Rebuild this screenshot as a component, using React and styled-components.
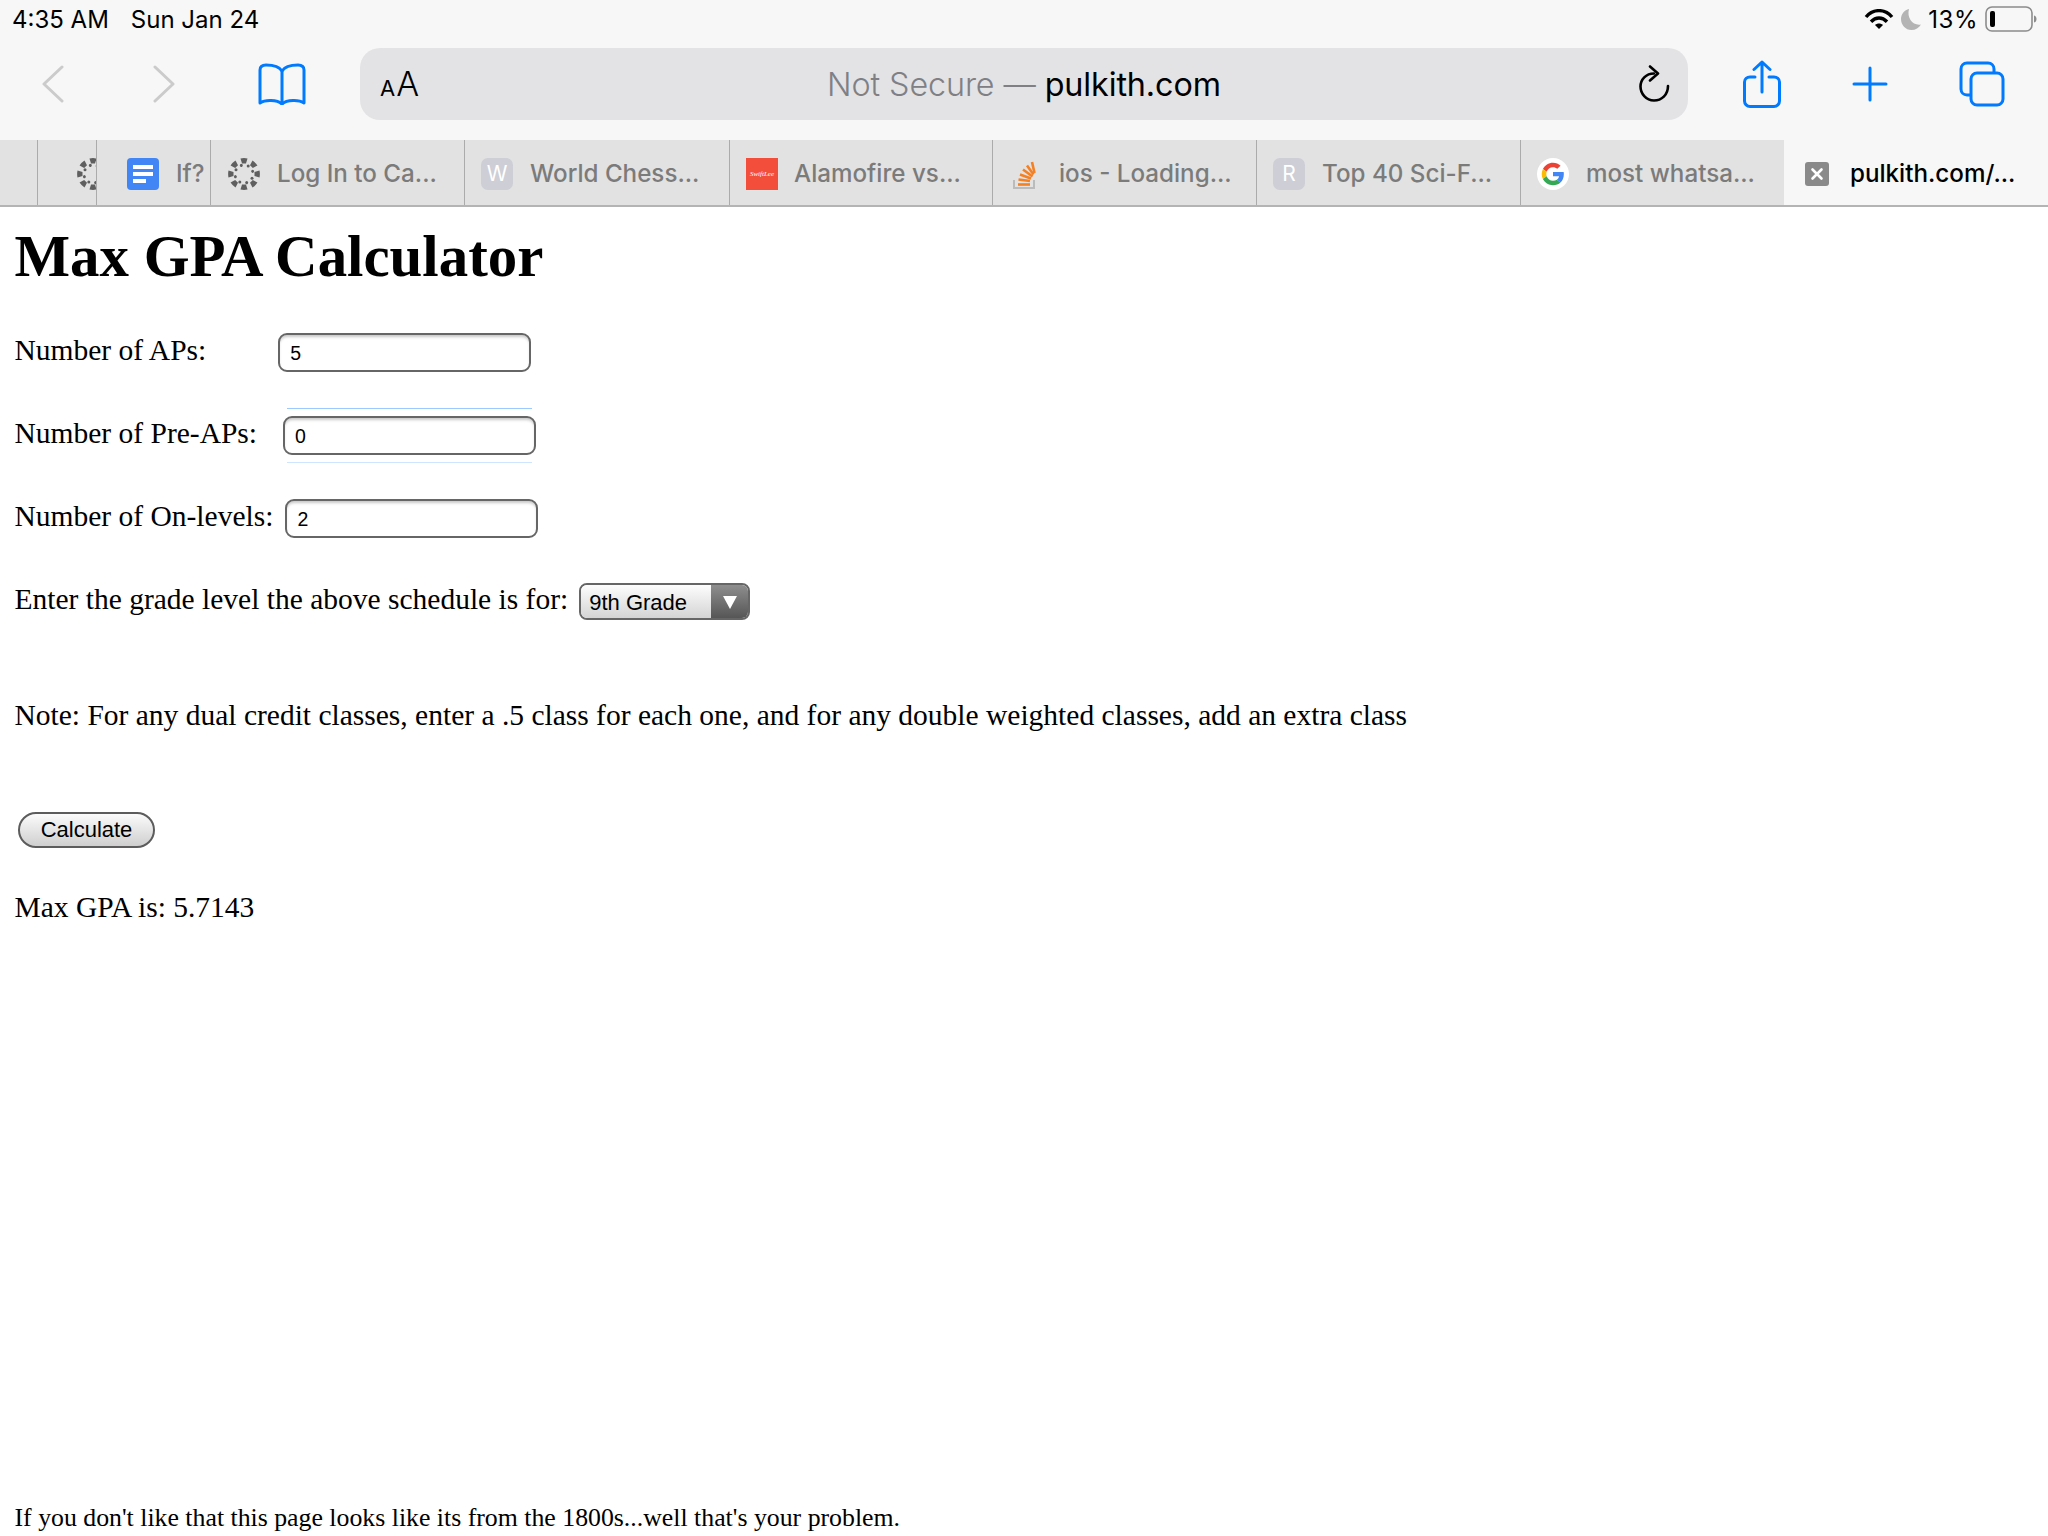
import React from 'react';
import styled, { createGlobalStyle } from 'styled-components';

const GlobalStyle = createGlobalStyle`
  html, body { margin: 0; padding: 0; background: #fff; }
  * { box-sizing: border-box; }
`;

const Screen = styled.div`
  width: 2048px;
  height: 1536px;
  display: flex;
  flex-direction: column;
  overflow: hidden;
  font-family: "Liberation Serif", serif;
  color: #000;
`;

const Chrome = styled.header`
  background: #f7f7f7;
  font-family: Inter, "Liberation Sans", sans-serif;
`;

const StatusBar = styled.div`
  height: 48px;
  padding: 0 11px 10px 12px;
  display: flex;
  align-items: center;
  justify-content: space-between;
  font-size: 24px;
`;

const StatusLeft = styled.div`
  display: flex;
  gap: 22px;
`;

const StatusRight = styled.div`
  display: flex;
  align-items: center;
  gap: 7px;
`;

const Battery = styled.span`
  letter-spacing: 0.5px;
`;

const Toolbar = styled.div`
  height: 92px;
  padding: 0 44px 20px 42px;
  display: flex;
  align-items: center;
`;

const NavButton = styled.div`
  display: flex;
  width: ${p => p.$w}px;
  flex: none;
`;

const AddressBar = styled.div`
  width: 1328px;
  height: 72px;
  flex: none;
  margin-right: 55px;
  padding: 0 18px 0 20px;
  background: #e3e3e6;
  border-radius: 20px;
  display: flex;
  align-items: center;
  justify-content: space-between;
`;

const ReaderA = styled.div`
  display: flex;
  align-items: baseline;
  gap: 1px;
  width: 60px;
  line-height: 1;
`;

const SmallA = styled.span`font-size: 22px;`;
const BigA = styled.span`font-size: 34px; font-weight: 300;`;

const Url = styled.div`
  margin-right: 30px;
  font-size: 32.3px;
  font-weight: 300;
  color: #808084;
  white-space: nowrap;
  letter-spacing: -0.1px;
`;

const Host = styled.span`
  color: #000;
  font-weight: 400;
`;

const Actions = styled.div`
  display: flex;
  align-items: center;
  gap: 71px;
`;

const TabBar = styled.div`
  display: flex;
  height: 67px;
  border-bottom: 2px solid #b4b4b4;
  background: #e2e2e2;
`;

const Tab = styled.div`
  width: ${p => p.$w}px;
  flex: none;
  height: 65px;
  padding: 2px 0 0 ${p => p.$pl ?? 16}px;
  display: flex;
  align-items: center;
  gap: ${p => p.$gap ?? 17}px;
  overflow: hidden;
  border-right: ${p => (p.$active || p.$last ? 'none' : '1px solid #ababab')};
  background: ${p => (p.$active ? '#f7f7f7' : '#e2e2e2')};
  color: ${p => (p.$active ? '#000' : '#7b7b7b')};
  font-size: 24.2px;
  font-weight: 500;
  white-space: nowrap;
`;

const LetterIcon = styled.div`
  width: 32px;
  height: 32px;
  flex: none;
  border-radius: 7px;
  background: #cdced6;
  color: #fff;
  font-size: 21px;
  font-weight: 400;
  display: flex;
  align-items: center;
  justify-content: center;
`;

const RedIcon = styled.div`
  width: 32px;
  height: 32px;
  flex: none;
  background: #f24e3b;
  color: #fff;
  font-family: "Liberation Serif", serif;
  font-style: italic;
  font-size: 7px;
  display: flex;
  align-items: center;
  justify-content: center;
`;

const Favicon = styled.svg`
  flex: none;
  display: block;
`;

const Page = styled.main`
  flex: 1;
  padding: 0 14.5px;
  display: flex;
  flex-direction: column;
  font-size: 29.5px;
`;

const Title = styled.h1`
  margin: 16px 0 20px;
  font-size: 58.9px;
  line-height: 68px;
  font-weight: bold;
`;

const Row = styled.div`
  height: 83px;
  display: flex;
  align-items: center;
  white-space: nowrap;
`;

const Label = styled.label`
  position: relative;
  top: -2px;
`;

const InputWrap = styled.div`
  position: relative;
  margin-left: ${p => p.$ml}px;
  ${p => p.$focusLines && `
    &::before, &::after {
      content: '';
      position: absolute;
      left: 4px;
      width: 245px;
      height: 1px;
      background: #9ccaff;
    }
    &::before { top: -8px; }
    &::after { bottom: -8px; background: #cfe4ff; }
  `}
`;

const NumberInput = styled.input`
  display: block;
  width: 253px;
  height: 39px;
  padding: 2px 10px 0;
  border: 2px solid #666;
  border-radius: 9px;
  background: #fff;
  box-shadow: inset 0 3px 3px -1px #c8c8c8;
  font-family: "Liberation Sans", sans-serif;
  font-size: 19.5px;
  color: #000;
  outline: none;
`;

const Select = styled.div`
  width: 171px;
  height: 37px;
  margin-left: 11px;
  border: 2px solid #666;
  border-radius: 8px;
  overflow: hidden;
  display: flex;
  font-family: "Liberation Sans", sans-serif;
  font-size: 22px;
`;

const SelectValue = styled.div`
  flex: 1;
  padding: 2px 0 0 8px;
  display: flex;
  align-items: center;
  background: linear-gradient(#fdfdfd, #d4d4d4);
`;

const SelectArrow = styled.div`
  width: 37px;
  display: flex;
  align-items: center;
  justify-content: center;
  background: linear-gradient(#8e8e8e, #565656);
`;

const Note = styled.p`
  margin: 47px 0 0;
  line-height: 50px;
  white-space: nowrap;
`;

const CalcButton = styled.button`
  display: block;
  width: 137px;
  height: 36px;
  margin: 72px 0 0 3.5px;
  padding: 0;
  border: 2px solid #5c5c5c;
  border-radius: 18px;
  background: linear-gradient(#fbfbfb, #cfcfcf);
  font-family: "Liberation Sans", sans-serif;
  font-size: 22px;
  color: #000;
`;

const Result = styled.p`
  margin: 39px 0 0;
  line-height: 40px;
`;

const Footer = styled.p`
  margin: auto 0 0;
  line-height: 36px;
  font-size: 25.8px;
  white-space: nowrap;
`;

const BLUE = '#007aff';

const Chevron = ({ dir }) => (
  <svg width="22" height="38" viewBox="0 0 22 38" fill="none" stroke="#cbcbcb" strokeWidth="3" strokeLinecap="round" strokeLinejoin="round">
    <path d={dir === 'left' ? 'M20 2 2 19l18 17' : 'M2 2l18 17L2 36'} />
  </svg>
);

const BookIcon = () => (
  <svg width="48" height="42" viewBox="0 0 48 42" fill="none" stroke={BLUE} strokeWidth="3" strokeLinejoin="round" strokeLinecap="round">
    <path d="M24 8C21 3 15 2 8 2 4.500 2 2 3.500 2 7v33c5-3.500 17-3.500 22 1 5-4.500 17-4.500 22-1V7c0-3.500-2.500-5-6-5-7 0-13 1-16 6Z" />
    <path d="M24 8v33" />
  </svg>
);

const ReloadIcon = () => (
  <svg width="32" height="38" viewBox="0 0 32 38" fill="none" stroke="#000" strokeWidth="2.600" strokeLinecap="round" strokeLinejoin="round">
    <path d="M16 8.500C8 8.500 2.500 14.500 2.500 21.500S8 35.500 16 35.500c7.500 0 14-5.500 14-14.500" />
    <path d="M12 1.500l8 7-8 7" />
  </svg>
);

const ShareIcon = () => (
  <svg width="38" height="48" viewBox="0 0 38 48" fill="none" stroke={BLUE} strokeWidth="3" strokeLinecap="round" strokeLinejoin="round">
    <path d="M12 17H7c-3 0-5.500 2-5.500 5v19c0 3 2.500 5.500 5.500 5.500h24c3 0 5.500-2.500 5.500-5.500V22c0-3-2.500-5-5.500-5h-5" />
    <path d="M19 32V2M11 9.500 19 2l8 7.500" />
  </svg>
);

const PlusIcon = () => (
  <svg width="36" height="36" viewBox="0 0 36 36" fill="none" stroke={BLUE} strokeWidth="3" strokeLinecap="round">
    <path d="M18 2v32M2 18h32" />
  </svg>
);

const TabsIcon = () => (
  <svg width="46" height="46" viewBox="0 0 46 46" fill="none" stroke={BLUE} strokeWidth="3" strokeLinejoin="round">
    <path d="M11 34H8c-3.500 0-6-2.500-6-6V8c0-3.500 2.500-6 6-6h21c3.500 0 6 2.500 6 6v3" />
    <rect x="12" y="12" width="32" height="32" rx="6" />
  </svg>
);

const WifiIcon = () => (
  <svg width="30" height="21" viewBox="0 0 30 21" fill="none" stroke="#000" strokeWidth="3.400">
    <path d="M2 8C9-.5 21-.5 28 8" />
    <path d="M7 12.800c4.800-5 11.200-5 16 0" />
    <path d="M15 20l-4-4c2.400-2 5.600-2 8 0l-4 4Z" fill="#000" stroke="none" />
  </svg>
);

const MoonIcon = () => (
  <svg width="20" height="22" viewBox="0 0 20 22">
    <path d="M8 1C3.500 2 0 6 0 11c0 6 4.500 11 10.500 11 4 0 7.500-2 9.500-5.500C12 18 5.500 10 8 1Z" fill="#b4b4b4" />
  </svg>
);

const BatteryIcon = () => (
  <svg width="52" height="26" viewBox="0 0 52 26" fill="none">
    <rect x="1" y="1" width="46" height="24" rx="6" stroke="#8c8c8c" strokeWidth="1.600" />
    <rect x="5" y="5" width="5" height="16" rx="2" fill="#000" />
    <path d="M49 9.500c2 .5 2.500 2 2.500 3.500s-.5 3-2.500 3.500Z" fill="#8c8c8c" />
  </svg>
);

const CanvasIcon = () => {
  const angles = [0, 45, 90, 135, 180, 225, 270, 315];
  return (
    <Favicon width="32" height="32" viewBox="-16 -16 32 32" fill="#5f5f5f">
      {angles.map(a => (
        <g key={a} transform={`rotate(${a})`}>
          <path d="M-3.500-15.500a16 16 0 0 1 7 0L2-10.500h-4Z" />
          <circle cx="4.200" cy="-8" r="1.500" />
        </g>
      ))}
    </Favicon>
  );
};

const DocsIcon = () => (
  <Favicon width="32" height="32" viewBox="0 0 32 32">
    <rect width="32" height="32" rx="4" fill="#4285f4" />
    <path d="M6 7h20v4H6ZM6 14h20v4H6ZM6 21h13v4H6Z" fill="#fff" />
  </Favicon>
);

const StackIcon = () => (
  <Favicon width="32" height="32" viewBox="0 0 32 32" fill="none">
    <path d="M6 22v8h20v-8" stroke="#bcbbbb" strokeWidth="2" />
    <g stroke="#f48024" strokeWidth="2.600">
      <path d="M10 26.500h12" />
      <path d="M10.500 21.500l11.500 1.500" />
      <path d="M12 16.500l11 4" />
      <path d="M15 11.500l9.500 7" />
      <path d="M19 7.500l6.500 9" />
      <path d="M24 4l2.500 11" />
    </g>
  </Favicon>
);

const GoogleIcon = () => (
  <Favicon width="32" height="32" viewBox="-10 -10 68 68">
    <circle cx="24" cy="24" r="34" fill="#fff" />
    <path fill="#EA4335" d="M24 9.500c3.540 0 6.710 1.220 9.210 3.600l6.850-6.850C35.900 2.380 30.470 0 24 0 14.620 0 6.510 5.380 2.560 13.220l7.980 6.190C12.430 13.720 17.740 9.500 24 9.500z" />
    <path fill="#4285F4" d="M46.980 24.550c0-1.570-.15-3.090-.38-4.550H24v9.020h12.940c-.58 2.960-2.260 5.480-4.780 7.180l7.730 6c4.510-4.180 7.090-10.360 7.090-17.650z" />
    <path fill="#FBBC05" d="M10.530 28.590c-.48-1.450-.76-2.990-.76-4.590s.27-3.140.76-4.590l-7.980-6.190C.92 16.460 0 20.120 0 24c0 3.880.92 7.540 2.560 10.780l7.970-6.190z" />
    <path fill="#34A853" d="M24 48c6.480 0 11.930-2.130 15.890-5.810l-7.730-6c-2.150 1.450-4.920 2.300-8.160 2.300-6.260 0-11.570-4.220-13.470-9.910l-7.980 6.190C6.510 42.620 14.620 48 24 48z" />
  </Favicon>
);

const CloseIcon = () => (
  <Favicon width="24" height="24" viewBox="0 0 24 24">
    <rect width="24" height="24" rx="3" fill="#8a8a8a" />
    <path d="M7.500 7.500l9 9M16.500 7.500l-9 9" stroke="#fff" strokeWidth="2.600" strokeLinecap="round" />
  </Favicon>
);

export default function App() {
  return (
    <>
      <GlobalStyle />
      <Screen>
        <Chrome>
          <StatusBar>
            <StatusLeft>
              <span>4:35 AM</span>
              <span>Sun Jan 24</span>
            </StatusLeft>
            <StatusRight>
              <WifiIcon />
              <MoonIcon />
              <Battery>13%</Battery>
              <BatteryIcon />
            </StatusRight>
          </StatusBar>
          <Toolbar>
            <NavButton $w={111}><Chevron dir="left" /></NavButton>
            <NavButton $w={105}><Chevron dir="right" /></NavButton>
            <NavButton $w={102}><BookIcon /></NavButton>
            <AddressBar>
              <ReaderA><SmallA>A</SmallA><BigA>A</BigA></ReaderA>
              <Url>Not Secure — <Host>pulkith.com</Host></Url>
              <ReloadIcon />
            </AddressBar>
            <Actions>
              <ShareIcon />
              <PlusIcon />
              <TabsIcon />
            </Actions>
          </Toolbar>
          <TabBar>
            <Tab $w={38} />
            <Tab $w={59} $pl={39}><CanvasIcon /></Tab>
            <Tab $w={114} $pl={30}><DocsIcon />If?</Tab>
            <Tab $w={254} $pl={17}><CanvasIcon />Log In to Ca...</Tab>
            <Tab $w={265}><LetterIcon>W</LetterIcon>World Chess...</Tab>
            <Tab $w={263} $gap={16}><RedIcon>SwiftLee</RedIcon>Alamofire vs...</Tab>
            <Tab $w={264} $pl={15} $gap={19}><StackIcon />ios - Loading...</Tab>
            <Tab $w={264}><LetterIcon>R</LetterIcon>Top 40 Sci-F...</Tab>
            <Tab $w={263} $last><GoogleIcon />most whatsa...</Tab>
            <Tab $w={264} $active $pl={21} $gap={21}><CloseIcon />pulkith.com/...</Tab>
          </TabBar>
        </Chrome>
        <Page>
          <Title>Max GPA Calculator</Title>
          <Row>
            <Label>Number of APs:</Label>
            <InputWrap $ml={72}><NumberInput defaultValue="5" /></InputWrap>
          </Row>
          <Row>
            <Label>Number of Pre-APs:</Label>
            <InputWrap $ml={26} $focusLines><NumberInput defaultValue="0" /></InputWrap>
          </Row>
          <Row>
            <Label>Number of On-levels:</Label>
            <InputWrap $ml={12}><NumberInput defaultValue="2" /></InputWrap>
          </Row>
          <Row>
            <Label>Enter the grade level the above schedule is for:</Label>
            <Select>
              <SelectValue>9th Grade</SelectValue>
              <SelectArrow>
                <svg width="14" height="14" viewBox="0 0 14 14"><path d="M0 1h14L7 14Z" fill="#fff" /></svg>
              </SelectArrow>
            </Select>
          </Row>
          <Note>Note: For any dual credit classes, enter a .5 class for each one, and for any double weighted classes, add an extra class</Note>
          <CalcButton>Calculate</CalcButton>
          <Result>Max GPA is: 5.7143</Result>
          <Footer>If you don't like that this page looks like its from the 1800s...well that's your problem.</Footer>
        </Page>
      </Screen>
    </>
  );
}
